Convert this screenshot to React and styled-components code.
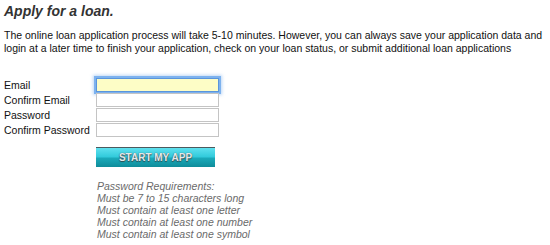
import React from "react";
import styled, { createGlobalStyle } from "styled-components";

const Global = createGlobalStyle`
  html, body { margin: 0; padding: 0; background: #ffffff; }
  body { font-family: "Liberation Sans", Arial, Helvetica, sans-serif; }
`;

const Page = styled.div`
  width: 550px;
  height: 245px;
  box-sizing: border-box;
  padding: 3px 4px 0 4px;
  overflow: hidden;
`;

const Title = styled.h1`
  margin: 0;
  font-size: 14px;
  line-height: 16px;
  font-weight: bold;
  font-style: italic;
  color: #333333;
`;

const Intro = styled.p`
  margin: 10px 0 0 0;
  font-size: 10.5px;
  line-height: 13px;
  color: #111111;
`;

const Form = styled.form`
  margin-top: 23px;
  display: grid;
  grid-template-columns: 92px 123px;
  row-gap: 1px;
  align-items: center;
`;

const Label = styled.label`
  font-size: 10.5px;
  line-height: 14px;
  color: #111111;
  white-space: nowrap;
`;

const Field = styled.input`
  box-sizing: border-box;
  width: 123px;
  height: 14px;
  margin: 0;
  padding: 0 2px;
  border: 1px solid #c4c4c4;
  border-top-color: #b0b0b0;
  background: ${(p) => (p.$focused ? "#fdfdc6" : "#ffffff")};
  box-shadow: ${(p) => (p.$focused ? "0 0 0 2px #7db2ee, 0 0 3px 3px rgba(125,178,238,0.5)" : "none")};
  border-color: ${(p) => (p.$focused ? "#5a95dc" : "#c4c4c4")};
  font-size: 10px;
  outline: none;
`;

const ButtonRow = styled.div`
  margin-top: 10px;
  padding-left: 92px;
`;

const StartButton = styled.button`
  box-sizing: border-box;
  width: 119px;
  height: 20px;
  margin: 0;
  padding: 0;
  border: none;
  border-top: 1px solid #4c5a5e;
  background: linear-gradient(to bottom, #5fe1ef 0%, #33cbdc 45%, #1aa9b9 55%, #0f8c9a 100%);
  color: #e3e9ec;
  font-family: "Liberation Sans", Arial, sans-serif;
  font-weight: bold;
  font-size: 10px;
  letter-spacing: 0px;
  text-shadow: 0 1px 1px #33494e, 0 0 1px #33494e;
  cursor: pointer;
`;

const Requirements = styled.div`
  margin-top: 13px;
  padding-left: 93px;
  font-size: 10.5px;
  line-height: 12px;
  font-style: italic;
  color: #6a6a6a;
`;

const fields = [
  { label: "Email", type: "text", focused: true },
  { label: "Confirm Email", type: "text" },
  { label: "Password", type: "password" },
  { label: "Confirm Password", type: "password" },
];

const reqs = [
  "Password Requirements:",
  "Must be 7 to 15 characters long",
  "Must contain at least one letter",
  "Must contain at least one number",
  "Must contain at least one symbol",
];

export default function App() {
  return (
    <>
      <Global />
      <Page>
        <Title>Apply for a loan.</Title>
        <Intro>
          The online loan application process will take 5-10 minutes. However, you can always save your
          application data and login at a later time to finish your application, check on your loan status, or
          submit additional loan applications
        </Intro>
        <Form onSubmit={(e) => e.preventDefault()}>
          {fields.map((f) => (
            <React.Fragment key={f.label}>
              <Label>{f.label}</Label>
              <Field type={f.type} $focused={f.focused} />
            </React.Fragment>
          ))}
        </Form>
        <ButtonRow>
          <StartButton type="button">START MY APP</StartButton>
        </ButtonRow>
        <Requirements>
          {reqs.map((r) => (
            <div key={r}>{r}</div>
          ))}
        </Requirements>
      </Page>
    </>
  );
}
